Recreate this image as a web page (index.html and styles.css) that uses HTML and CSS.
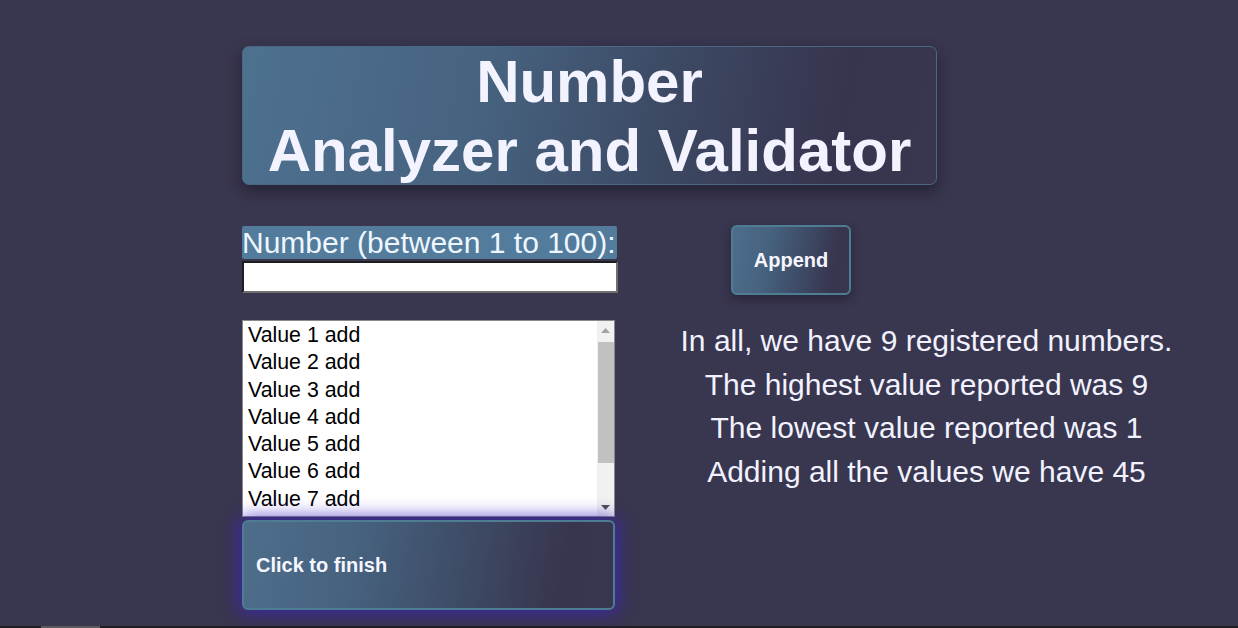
FILE: index.html
```html
<!DOCTYPE html>
<html lang="en">
<head>
<meta charset="utf-8">
<title>Number Analyzer and Validator</title>
<link rel="stylesheet" href="styles.css">
</head>
<body>
<div class="page">
  <h1 class="title">Number<br>Analyzer and Validator</h1>
  <div class="main">
    <div class="left">
      <div class="label-row"><label class="label" for="num">Number (between 1 to 100):</label></div>
      <input class="num-input" id="num" type="number">
      <div class="list" role="listbox">
        <div class="items">
          <div class="item" role="option">Value 1 add</div>
          <div class="item" role="option">Value 2 add</div>
          <div class="item" role="option">Value 3 add</div>
          <div class="item" role="option">Value 4 add</div>
          <div class="item" role="option">Value 5 add</div>
          <div class="item" role="option">Value 6 add</div>
          <div class="item" role="option">Value 7 add</div>
        </div>
        <div class="scrollbar" aria-hidden="true">
          <div class="sb-btn">
            <svg width="17" height="17" viewBox="0 0 17 17"><path d="M4 12 L8.5 7 L13 12 Z" fill="#a3a3a3"/></svg>
          </div>
          <div class="sb-track"><div class="sb-thumb"></div></div>
          <div class="sb-btn">
            <svg width="17" height="17" viewBox="0 0 17 17"><path d="M4 6 L8.5 11 L13 6 Z" fill="#505050"/></svg>
          </div>
        </div>
      </div>
      <button class="btn finish" type="button">Click to finish</button>
    </div>
    <div class="right">
      <button class="btn append" type="button">Append</button>
      <div class="stats">
        <p class="stat">In all, we have 9 registered numbers.</p>
        <p class="stat">The highest value reported was 9</p>
        <p class="stat">The lowest value reported was 1</p>
        <p class="stat">Adding all the values we have 45</p>
      </div>
    </div>
  </div>
</div>
<div class="footer"><div class="footer-thumb"></div></div>
</body>
</html>
```
FILE: styles.css
```css
html, body {
  margin: 0;
  padding: 0;
}
body {
  background: #39364f;
  font-family: "Liberation Sans", Arial, sans-serif;
  color: #f2f2ff;
  height: 628px;
  overflow: hidden;
  position: relative;
}
.page {
  padding: 46px 0 0 242px;
}
.title {
  margin: 0;
  width: 693px;
  font-size: 60px;
  font-weight: bold;
  line-height: 69px;
  text-align: center;
  color: #f3f3ff;
  border: 1px solid #4a6884;
  border-radius: 7px;
  height: 137px;
  background: linear-gradient(100deg, #4e7190 0%, #46627f 35%, #3c4862 62%, #37344f 85%, #39364f 100%);
  box-shadow: 0 6px 14px rgba(20, 18, 32, 0.55);
}
.main {
  display: flex;
  margin-top: 41px;
}
.left {
  width: 375px;
  display: flex;
  flex-direction: column;
  align-items: flex-start;
}
.label-row {
  font-size: 30px;
  line-height: 34.5px;
  height: 35px;
}
.label {
  background: #537c9c;
  color: #eef6ff;
  border-radius: 2px;
  padding: 0 1px 0 0;
}
.num-input {
  display: block;
  box-sizing: border-box;
  width: 376px;
  height: 32px;
  margin: 0;
  padding: 0 4px;
  background: #fff;
  border-style: solid;
  border-width: 2px;
  border-color: #1d1d1d #6f6f6f #6f6f6f #1d1d1d;
  font-size: 20px;
  font-family: "Liberation Sans", Arial, sans-serif;
}
.list {
  box-sizing: border-box;
  width: 373px;
  height: 197px;
  margin-top: 27px;
  border: 1px solid #8a8a8a;
  background: #fff;
  font-size: 21.33px;
  color: #000;
  display: flex;
}
.items {
  flex: 1;
  overflow: hidden;
}
.item {
  padding: 2px 5px 0 5px;
  height: 25.3px;
  line-height: 25.3px;
  white-space: nowrap;
}
.scrollbar {
  width: 17px;
  background: #f1f1f1;
  display: flex;
  flex-direction: column;
}
.sb-btn {
  height: 17px;
  display: flex;
}
.sb-track {
  flex: 1;
  padding-top: 4px;
}
.sb-thumb {
  margin-left: 1px;
  height: 121px;
  background: #c1c1c1;
}
.btn {
  font-family: "Liberation Sans", Arial, sans-serif;
  font-weight: bold;
  font-size: 20px;
  color: #f6f6ff;
  border: 2px solid #4e7c93;
  border-radius: 6px;
  background: linear-gradient(100deg, #4d6e8b 0%, #46627f 30%, #3d4963 62%, #38354f 85%, #39364f 100%);
  cursor: pointer;
  margin: 0;
}
.finish {
  display: block;
  width: 373px;
  height: 90px;
  margin-top: 3px;
  text-align: left;
  padding: 0 12px;
  box-shadow: 0 0 18px 3px rgba(60, 36, 190, 0.8);
  position: relative;
}
.right {
  flex: 1;
  display: flex;
  flex-direction: column;
  align-items: flex-start;
  margin-left: -2px;
}
.append {
  width: 120px;
  height: 70px;
  margin-left: 116px;
  margin-top: -1px;
  padding: 0;
  text-align: center;
  box-shadow: 0 4px 10px rgba(20, 18, 32, 0.45);
}
.stats {
  align-self: stretch;
  margin-top: 24px;
  text-align: center;
}
.stat {
  margin: 0;
  font-size: 30px;
  line-height: 43.7px;
  color: #f2f2ff;
}
.footer {
  position: absolute;
  left: 0;
  right: 0;
  bottom: 0;
  height: 2px;
  background: #1f1f24;
}
.footer-thumb {
  margin-left: 41px;
  width: 59px;
  height: 2px;
  background: #5a5a5f;
}
```
